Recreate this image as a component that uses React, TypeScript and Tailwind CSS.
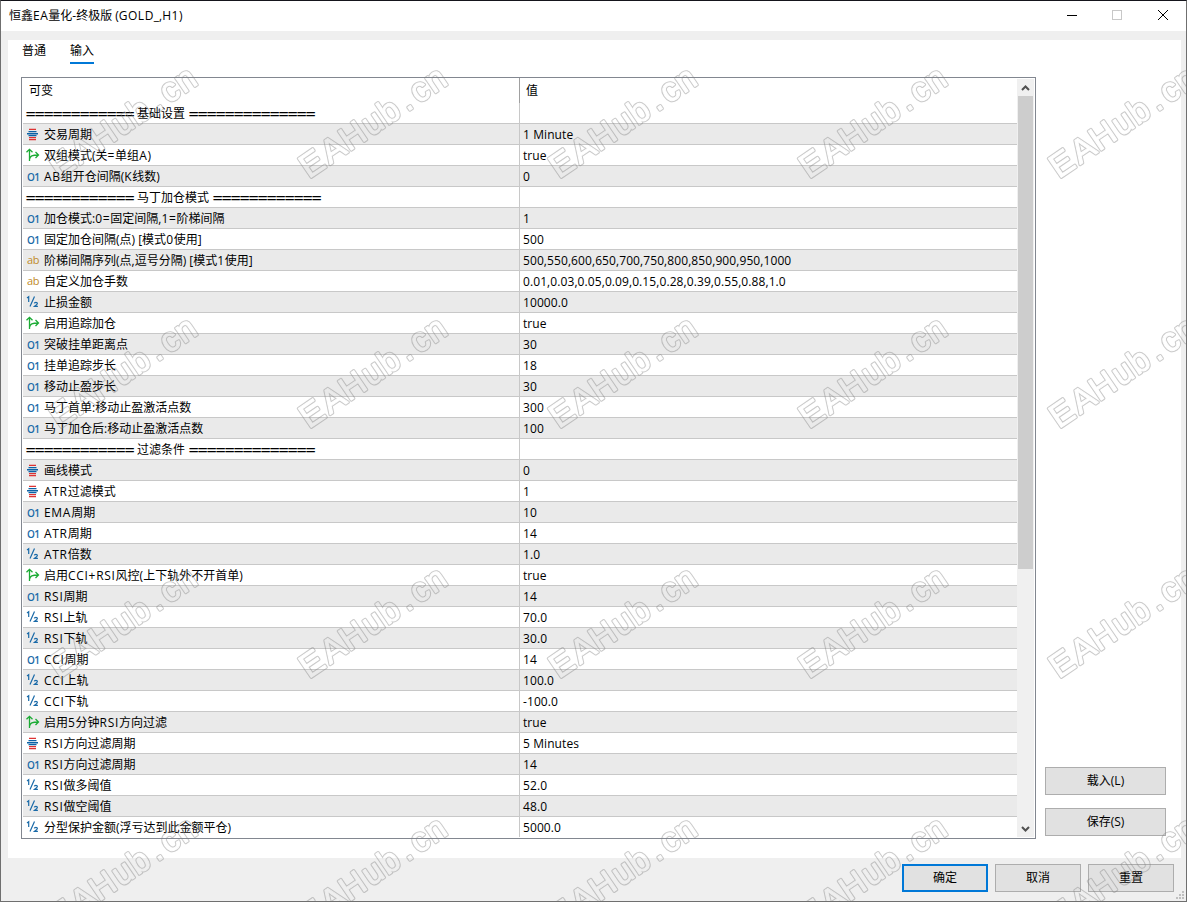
import { clsx } from 'clsx';

type Kind = 'enum' | 'bool' | 'int' | 'str' | 'num';

interface Row {
  kind?: Kind;
  label: string;
  value?: string;
  bars?: [number, number];
}

const ROWS: Row[] = [
  { label: '基础设置', bars: [12, 14] },
  { kind: 'enum', label: '交易周期', value: '1 Minute' },
  { kind: 'bool', label: '双组模式(关=单组A)', value: 'true' },
  { kind: 'int', label: 'AB组开仓间隔(K线数)', value: '0' },
  { label: '马丁加仓模式', bars: [12, 12] },
  { kind: 'int', label: '加仓模式:0=固定间隔,1=阶梯间隔', value: '1' },
  { kind: 'int', label: '固定加仓间隔(点) [模式0使用]', value: '500' },
  { kind: 'str', label: '阶梯间隔序列(点,逗号分隔) [模式1使用]', value: '500,550,600,650,700,750,800,850,900,950,1000' },
  { kind: 'str', label: '自定义加仓手数', value: '0.01,0.03,0.05,0.09,0.15,0.28,0.39,0.55,0.88,1.0' },
  { kind: 'num', label: '止损金额', value: '10000.0' },
  { kind: 'bool', label: '启用追踪加仓', value: 'true' },
  { kind: 'int', label: '突破挂单距离点', value: '30' },
  { kind: 'int', label: '挂单追踪步长', value: '18' },
  { kind: 'int', label: '移动止盈步长', value: '30' },
  { kind: 'int', label: '马丁首单:移动止盈激活点数', value: '300' },
  { kind: 'int', label: '马丁加仓后:移动止盈激活点数', value: '100' },
  { label: '过滤条件', bars: [12, 14] },
  { kind: 'enum', label: '画线模式', value: '0' },
  { kind: 'enum', label: 'ATR过滤模式', value: '1' },
  { kind: 'int', label: 'EMA周期', value: '10' },
  { kind: 'int', label: 'ATR周期', value: '14' },
  { kind: 'num', label: 'ATR倍数', value: '1.0' },
  { kind: 'bool', label: '启用CCI+RSI风控(上下轨外不开首单)', value: 'true' },
  { kind: 'int', label: 'RSI周期', value: '14' },
  { kind: 'num', label: 'RSI上轨', value: '70.0' },
  { kind: 'num', label: 'RSI下轨', value: '30.0' },
  { kind: 'int', label: 'CCI周期', value: '14' },
  { kind: 'num', label: 'CCI上轨', value: '100.0' },
  { kind: 'num', label: 'CCI下轨', value: '-100.0' },
  { kind: 'bool', label: '启用5分钟RSI方向过滤', value: 'true' },
  { kind: 'enum', label: 'RSI方向过滤周期', value: '5 Minutes' },
  { kind: 'int', label: 'RSI方向过滤周期', value: '14' },
  { kind: 'num', label: 'RSI做多阈值', value: '52.0' },
  { kind: 'num', label: 'RSI做空阈值', value: '48.0' },
  { kind: 'num', label: '分型保护金额(浮亏达到此金额平仓)', value: '5000.0' },
];

function KindIcon({ kind }: { kind: Kind }) {
  if (kind === 'enum') {
    return (
      <svg width="14" height="14" viewBox="0 0 14 14">
        <path d="M3 1.8h7v1.2H3zM3 10h7v1.2H3zM3 12h7v1.2H3z" fill="#dd3333" />
        <path d="M2.5 4h8v1.3h-8zM1 6h11v1.5H1zM2.5 8h8v1.3h-8z" fill="#0d62a5" />
      </svg>
    );
  }
  if (kind === 'bool') {
    return (
      <svg width="14" height="14" viewBox="0 0 14 14" fill="none" stroke="#1cab35" strokeWidth="1.3">
        <path d="M3.5 13V1.5M.5 4.3l3-3 3 3M3.5 11.5C4 8 6 7 12.5 7M9.5 4l3 3-3 3" />
      </svg>
    );
  }
  if (kind === 'num') {
    return (
      <svg width="14" height="14" viewBox="0 0 14 14" fill="none" stroke="#1a6aa8" strokeWidth="1.2">
        <path d="M1 3l1.7-1.3V7M8.5 1.5L4 11.5" />
        <path d="M8.3 8.4c.1-1.3 3.1-1.4 3.1.1 0 1-1.8 1.8-3 2.9h3.5" />
      </svg>
    );
  }
  return (
    <span
      className={clsx(
        'pl-px leading-[14px]',
        kind === 'int'
          ? 'pt-px text-[10px] font-semibold tracking-[-0.7px] text-[#1a6aa8]'
          : 'text-[11px] font-medium tracking-[-0.3px] text-[#c08a2a]',
      )}
    >
      {kind === 'int' ? 'O1' : 'ab'}
    </span>
  );
}

// Latin capitals and digits run slightly wider than the Chinese text around them
function Label({ text, className = 'tracking-[0.7px]' }: { text: string; className?: string }) {
  return (
    <span className="whitespace-pre">
      {text.split(/([A-Z0-9=+]+)/).map((part, i) =>
        i % 2 === 1 ? (
          <span key={i} className={className}>
            {part}
          </span>
        ) : (
          part
        ),
      )}
    </span>
  );
}

function Bars({ count }: { count: number }) {
  return <span className="-ml-px font-['DejaVu_Sans'] text-[13.5px] tracking-[-2.31px]">{'='.repeat(count)}</span>;
}

function DialogButton({ children, className }: { children: string; className?: string }) {
  return (
    <button className={clsx('flex h-[28px] items-center justify-center bg-[#e1e1e1] pb-px', className)}>
      {children}
    </button>
  );
}

function InputRow({ row, index }: { row: Row; index: number }) {
  return (
    <div
      className={clsx(
        'flex h-[21px] border-b border-[#c8c8c8] last:border-white',
        index % 2 === 1 ? 'bg-[#eaeaea]' : 'bg-white',
      )}
    >
      <div className="flex w-[497px] shrink-0 items-center border-r border-[#c8c8c8] pl-[3px]">
        {row.bars && (
          <span className="flex items-center gap-[4px] pt-[2px]">
            <Bars count={row.bars[0]} />
            <span>{row.label}</span>
            <Bars count={row.bars[1]} />
          </span>
        )}
        {row.kind && (
          <>
            <span className="flex w-[18px] shrink-0 items-center">
              <KindIcon kind={row.kind} />
            </span>
            <span className="pt-[2px]">
              <Label text={row.label} />
            </span>
          </>
        )}
      </div>
      <div className="flex items-center pl-[3px] pt-[2px] tracking-[0.09px]">{row.value}</div>
    </div>
  );
}

function Watermarks() {
  const spots = [0, 1, 2, 3].flatMap((r) => [0, 1, 2, 3, 4].map((c) => ({ x: 58 + c * 250, y: 178 + r * 250 })));
  const marks = spots.map(({ x, y }) => (
    <text key={`${x}-${y}`} transform={`translate(${x} ${y}) rotate(-34.3)`} x="0 25.5 48.5 75 95 119 133 151">
      EAHub.cn
    </text>
  ));
  return (
    <svg className="pointer-events-none absolute inset-0" width="1187" height="902">
      <mask id="outline" maskUnits="userSpaceOnUse" x="0" y="0" width="1187" height="902">
        <g fontFamily="Liberation Sans" fontSize="33.5" strokeLinejoin="round">
          <g fill="#fff" stroke="#fff" strokeWidth="3">
            {marks}
          </g>
          <g fill="#000" stroke="#000" strokeWidth="1">
            {marks}
          </g>
        </g>
      </mask>
      <rect width="1187" height="902" fill="#808080" fillOpacity="0.42" mask="url(#outline)" />
    </svg>
  );
}

export default function App() {
  return (
    <div className="relative flex h-[902px] w-[1187px] flex-col overflow-hidden border border-[#6f6f6f] border-t-[#15151c] bg-[#efefef] font-['Open_Sans','Noto_Sans_CJK_SC',sans-serif] text-[12px] leading-[16px] text-black">
      <header className="flex h-[30px] shrink-0 items-center justify-between bg-white pl-[8px]">
        <Label text="恒鑫EA量化-终极版 (GOLD_,H1)" className="tracking-[0.5px]" />
        <svg width="120" height="30" viewBox="0 0 120 30" fill="none" shapeRendering="crispEdges">
          <path d="M1 14.5h10" stroke="#000" />
          <path d="M46.5 9.5h9v9h-9z" stroke="#c8c8c8" />
          <path d="M92 9l10 10M102 9L92 19" stroke="#000" shapeRendering="auto" />
        </svg>
      </header>

      <main className="ml-[7px] mr-[5px] mt-[9px] flex h-[818px] shrink-0 flex-col bg-white">
        <nav className="flex h-[37px] shrink-0 gap-[24px] pl-[14px] pt-[3px]">
          <span className="h-[21px]">普通</span>
          <span className="h-[21px] border-b-2 border-[#0078d7]">输入</span>
        </nav>
        <div className="flex pl-[13px]">
          <section className="flex h-[762px] w-[1015px] shrink-0 border border-[#828790]">
            <div className="w-[995px] pl-px">
              <div className="flex h-[25px]">
                <div className="w-[497px] border-r border-[#a0a0a0] pl-[6px] pt-[5px]">可变</div>
                <div className="pl-[6px] pt-[5px]">值</div>
              </div>
              {ROWS.map((row, i) => (
                <InputRow key={i} row={row} index={i} />
              ))}
            </div>
            <div className="my-px flex w-[17px] flex-col items-center bg-[#f0f0f0]">
              <svg width="17" height="17" fill="none" stroke="#505050" strokeWidth="2">
                <path d="M5 11l3.5-3.5L12 11" />
              </svg>
              <div className="h-[473px] w-[15px] bg-[#cdcdcd]" />
              <svg className="mt-auto" width="17" height="17" fill="none" stroke="#505050" strokeWidth="2">
                <path d="M5 7l3.5 3.5L12 7" />
              </svg>
            </div>
          </section>
          <aside className="ml-[9px] flex flex-col justify-end gap-[13px] pb-[3px]">
            <DialogButton className="w-[121px] border border-[#adadad]">载入(L)</DialogButton>
            <DialogButton className="w-[121px] border border-[#adadad]">保存(S)</DialogButton>
          </aside>
        </div>
      </main>

      <footer className="flex justify-end gap-[7px] pr-[12px] pt-[6px]">
        <DialogButton className="w-[86px] border-2 border-[#0078d7]">确定</DialogButton>
        <DialogButton className="w-[86px] border border-[#adadad]">取消</DialogButton>
        <DialogButton className="w-[86px] border border-[#adadad]">重置</DialogButton>
      </footer>

      {/* resize grip */}
      <svg className="absolute bottom-[2px] right-[2px]" width="8" height="8" fill="#bfbfbf">
        <path d="M6 0h2v2H6zM3 3h2v2H3zM6 3h2v2H6zM0 6h2v2H0zM3 6h2v2H3zM6 6h2v2H6z" />
      </svg>

      <Watermarks />
    </div>
  );
}
